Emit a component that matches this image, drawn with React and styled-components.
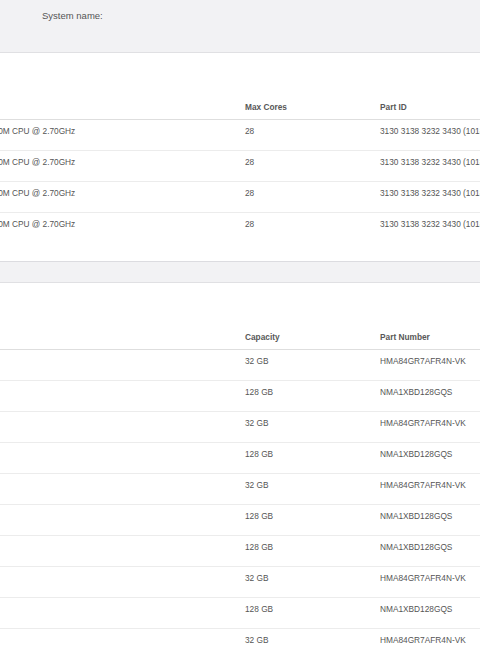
import React from 'react';
import styled, { createGlobalStyle } from 'styled-components';

const GlobalStyle = createGlobalStyle`
  html, body {
    margin: 0;
    padding: 0;
    overflow: hidden;
    background: #f2f2f4;
    font-family: "Liberation Sans", Arial, sans-serif;
    color: #555;
  }
`;

// the page is wider than the window and scrolled sideways, like the original
const Page = styled.div`
  margin-left: -160px;
  width: 900px;
  display: flex;
  flex-direction: column;
`;

const SystemBar = styled.div`
  height: 52px;
  box-sizing: border-box;
  padding: 10px 0 0 202px;
  font-size: 9.5px;
  line-height: 11px;
  color: #555;
`;

const Panel = styled.section`
  background: #fff;
  border-top: 1px solid #e0e0e3;
  border-bottom: 1px solid #dcdce0;
  padding: 42px 0 18px 47px;

  & + & {
    margin-top: 20px;
  }
`;

const Row = styled.div`
  display: grid;
  grid-template-columns: 358px 135px 1fr;
  border-bottom: 1px solid ${p => (p.$head ? '#dedede' : '#ececec')};
  &:last-child {
    border-bottom: none;
  }
`;

const Cell = styled.div`
  font-size: 8.3px;
  line-height: 10px;
  white-space: nowrap;
  padding: ${p => (p.$head ? '7px 0 7px' : '6px 0 14px')};
  font-weight: ${p => (p.$head ? 600 : 400)};
  color: ${p => (p.$head ? '#585858' : '#555')};
`;

const cpus = Array.from({ length: 4 }, () => ({
  name: 'Intel(R) Xeon(R) Platinum 8280M CPU @ 2.70GHz',
  cores: '28',
  part: '3130 3138 3232 3430 (10182240)',
}));

const HMA = 'HMA84GR7AFR4N-VK';
const NMA = 'NMA1XBD128GQS';
const dimms = [
  ['32 GB', HMA],
  ['128 GB', NMA],
  ['32 GB', HMA],
  ['128 GB', NMA],
  ['32 GB', HMA],
  ['128 GB', NMA],
  ['128 GB', NMA],
  ['32 GB', HMA],
  ['128 GB', NMA],
  ['32 GB', HMA],
  ['128 GB', NMA],
];

export default function App() {
  return (
    <>
      <GlobalStyle />
      <Page>
        <SystemBar>System name:</SystemBar>
        <Panel>
          <Row $head>
            <Cell $head></Cell>
            <Cell $head>Max Cores</Cell>
            <Cell $head>Part ID</Cell>
          </Row>
          {cpus.map((c, i) => (
            <Row key={i}>
              <Cell>{c.name}</Cell>
              <Cell>{c.cores}</Cell>
              <Cell>{c.part}</Cell>
            </Row>
          ))}
        </Panel>
        <Panel>
          <Row $head>
            <Cell $head></Cell>
            <Cell $head>Capacity</Cell>
            <Cell $head>Part Number</Cell>
          </Row>
          {dimms.map(([cap, part], i) => (
            <Row key={i}>
              <Cell></Cell>
              <Cell>{cap}</Cell>
              <Cell>{part}</Cell>
            </Row>
          ))}
        </Panel>
      </Page>
    </>
  );
}
